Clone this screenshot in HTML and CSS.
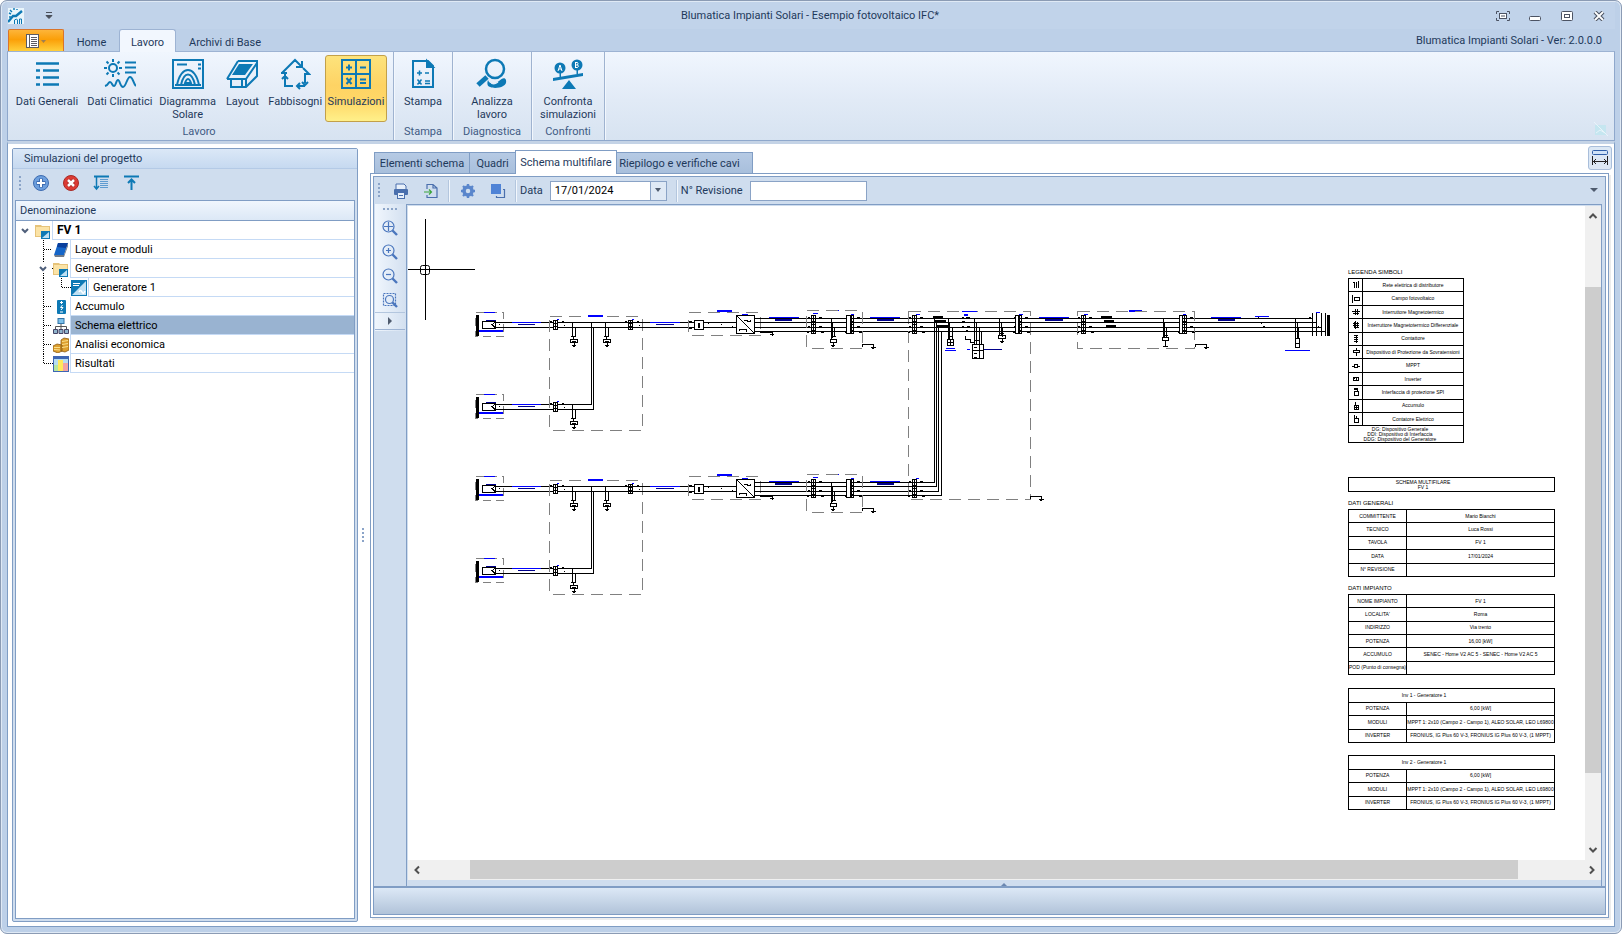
FILE: index.html
```
<!DOCTYPE html>
<html lang="it">
<head>
<meta charset="utf-8">
<title>Blumatica Impianti Solari - Esempio fotovoltaico IFC*</title>
<link rel="stylesheet" href="styles.css">
</head>
<body>
<div class="window">
  <header class="titlebar">
    <svg class="app-logo" viewBox="0 0 16 16" width="16" height="16"><rect width="16" height="16" fill="#e9f5fb"/><g fill="none" stroke="#0d79b5"><path d="M0 14L5 8h3l6-5" stroke-width="2.4"/><path d="M1 5l2 1M2 2l2 2M6 0v2M9 1v1M1 9h2" stroke-width="1.4"/><path d="M6.500 16v-4l2-1 1 1v4M11.500 16v-5l2 0v5" /></g></svg>
    <button class="quick" aria-label="Personalizza"><svg viewBox="0 0 8 8" width="8" height="8"><path d="M1 .5h6M1 3.500h6L4 6.500z" stroke="#4a4f5a" fill="#4a4f5a"/></svg></button>
    <h1 class="title">Blumatica Impianti Solari - Esempio fotovoltaico IFC*</h1>
    <div class="win-buttons">
      <button aria-label="Schermo intero"><svg viewBox="0 0 14 10" width="14" height="10" fill="none" stroke="#4c5363"><path d="M3 .5H.5V3M11 .5h2.500V3M3 9.500H.5V7M11 9.500h2.500V7"/><rect x="3.500" y="2.500" width="7" height="5" fill="#fff"/><path d="M5 5h4"/></svg></button>
      <button aria-label="Riduci"><svg viewBox="0 0 12 10" width="12" height="10"><rect x=".5" y="5.500" width="11" height="4" rx="1" fill="#fff" stroke="#4c5363"/></svg></button>
      <button aria-label="Ingrandisci"><svg viewBox="0 0 12 10" width="12" height="10" fill="#fff" stroke="#4c5363"><rect x=".5" y=".5" width="11" height="9" rx="1"/><rect x="3.500" y="3.500" width="5" height="3"/></svg></button>
      <button aria-label="Chiudi"><svg viewBox="0 0 12 10" width="12" height="10"><path d="M2 1l8 8M10 1L2 9" stroke="#4c5363" stroke-width="4"/><path d="M2 1l8 8M10 1L2 9" stroke="#fff" stroke-width="1.800"/></svg></button>
    </div>
  </header>
  <nav class="ribbon-tabs">
    <button class="app-button" aria-label="Menu"><svg viewBox="0 0 20 14" width="20" height="14"><rect x=".5" y=".5" width="12" height="13" fill="#fff" stroke="#5b5b62"/><path d="M3.500 1v12M5 3.500h6M5 5.500h6M5 7.500h6M5 9.500h6M5 11.500h6" stroke="#5b5b62"/><path d="M15 6h5l-2.500 3z" fill="#a08050"/></svg></button>
    <button class="rtab home">Home</button>
    <button class="rtab active">Lavoro</button>
    <button class="rtab base">Archivi di Base</button>
    <span class="version">Blumatica Impianti Solari - Ver: 2.0.0.0</span>
  </nav>
  <section class="ribbon">
    <div class="rgroup first">
      <div class="ritems">
        <button class="ritem w72"><svg viewBox="0 0 32 32" width="32" height="32"><path d="M5 5.500h23M5 12.500h4M12 12.500h16M5 19.500h4M12 19.500h16M5 26.500h4M12 26.500h16" stroke="#0d79b5" stroke-width="2.500"/></svg><span>Dati Generali</span></button>
        <button class="ritem w72"><svg viewBox="0 0 32 32" width="32" height="32" fill="none" stroke="#0d79b5" stroke-width="2"><circle cx="9" cy="10" r="4"/><path d="M9 1v3M9 16v3M0 10h3M15 10h3M2.500 3.500l2 2M13.500 14.500l2 2M15.500 3.500l-2 2M4.500 14.500l-2 2M21 4.500h11M21 9.500h11M21 14.500h11M1 28c4-1 3-4 5-4s2 4 4 4 2-6 4-6 2 7 5 7 4-10 7-10 3 6 6 9"/></svg><span>Dati Climatici</span></button>
        <button class="ritem w62"><svg viewBox="0 0 32 32" width="32" height="32" fill="none" stroke="#0d79b5" stroke-width="2"><rect x="1" y="2" width="30" height="28"/><path d="M5 6.500h10M26 6.500h3M26 10.500h3M5 27C9 7 23 7 27 27M9 27c3-14 11-14 14 0M12.500 27c2-8 5-8 7 0M15 27v-2h2v2M3 27h26"/></svg><span>Diagramma<br>Solare</span></button>
        <button class="ritem w46"><svg viewBox="0 0 32 32" width="32" height="32" fill="none" stroke="#0d79b5" stroke-width="2"><path d="M12 3h19v15L20 29H5v-8M1 21L12 3M1 21h19L31 5M20 21v8M16 22v7"/><path d="M13 6h14L19 17H6z" fill="#0d79b5" stroke="none"/></svg><span>Layout</span></button>
        <button class="ritem w58"><svg viewBox="0 0 32 32" width="32" height="32" fill="none" stroke="#0d79b5" stroke-width="2"><path d="M3 15L16 2l7 7M23 3v6h-6M24 10l6 6h-4v9M23 24l3 3 3-3M26 28h-8M21 25l-3 3 3 3M14 28H6V16M2 15h6M3 21l3-3 3 3"/></svg><span>Fabbisogni</span></button>
        <button class="ritem w62 sel"><svg viewBox="0 0 32 32" width="32" height="32" fill="none" stroke="#0d79b5" stroke-width="2"><path d="M2 2h28v28H2zM16 2v28M2 16h28"/><path d="M6 9.500h6M9 6.500v6M20 9.500h6M6.500 20l5 6M11.500 20l-5 6M20 21.500h6M20 25h6"/></svg><span>Simulazioni</span></button>
      </div>
      <div class="rlabel">Lavoro</div>
    </div>
    <div class="rgroup g2">
      <div class="ritems"><button class="ritem w46"><svg viewBox="0 0 32 32" width="32" height="32" fill="none" stroke="#0d79b5" stroke-width="2"><path d="M6 3h15l5 5v21H6z"/><path d="M20 3v6h6z" fill="#0d79b5"/><path stroke-width="1.500" d="M10 15h5M12.500 12.500v5M18 15h4M10.500 21.500l4 5M14.500 21.500l-4 5M18 23h5M18 25.500h5"/></svg><span>Stampa</span></button></div>
      <div class="rlabel">Stampa</div>
    </div>
    <div class="rgroup g3">
      <div class="ritems"><button class="ritem w62"><svg viewBox="0 0 32 32" width="32" height="32" fill="none" stroke="#0d79b5" stroke-width="2.500"><circle cx="19" cy="11" r="9"/><path d="M11 19l-9 8" stroke-width="5"/><path d="M12 22c2 6 9 3 11 1 3-3 6-4 7-1 2 8-12 9-16 7-3-1-3-4-2-7z" fill="#0d79b5" stroke="none"/><path d="M14 23c2 4 5 3 8 1" stroke="#e3edf8" stroke-width="1.500"/></svg><span>Analizza<br>lavoro</span></button></div>
      <div class="rlabel">Diagnostica</div>
    </div>
    <div class="rgroup g4">
      <div class="ritems"><button class="ritem w62"><svg viewBox="0 0 32 32" width="32" height="32"><g fill="#0d79b5"><circle cx="8" cy="10" r="5.500"/><circle cx="25" cy="7" r="5.500"/><path d="M1 20l30-5v3L1 23zM17 22l7 9H10zM7.500 14h1.500v6h-1.500zM24.500 12H26v5h-1.500z"/></g><path d="M6 13l2-6 2 6M7 11h2M23.500 4v6M23.500 4.500h2q1 1 0 2.500h-2M25.500 7q2 1 0 2.500h-2" fill="none" stroke="#fff"/></svg><span>Confronta<br>simulazioni</span></button></div>
      <div class="rlabel">Confronti</div>
    </div>
    <svg class="ribbon-mark" viewBox="0 0 14 14" width="14" height="14"><path d="M1 3h11v10H1z" fill="#c5e6f0"/><path d="M0 0l14 14M2 11l4-3 5 3" stroke="#e8f4fa" fill="none"/></svg>
  </section>

  <main class="main">
    <aside class="panel">
      <h2 class="panel-title">Simulazioni del progetto</h2>
      <div class="panel-tools">
        <i class="grip"></i>
        <button aria-label="Aggiungi"><svg viewBox="0 0 16 16" width="16" height="16"><circle cx="8" cy="8" r="7.500" fill="#6d9fdd" stroke="#3d6bb0"/><path d="M8 3.500v9M3.500 8h9" stroke="#3d6bb0" stroke-width="4"/><path d="M8 4v8M4 8h8" stroke="#fff" stroke-width="2"/></svg></button>
        <button aria-label="Elimina"><svg viewBox="0 0 16 16" width="16" height="16"><circle cx="8" cy="8" r="7.500" fill="#dc3b34" stroke="#a82a25"/><path d="M5 5l6 6M11 5l-6 6" stroke="#a82a25" stroke-width="4"/><path d="M5 5l6 6M11 5l-6 6" stroke="#fff" stroke-width="2.500"/></svg></button>
        <button aria-label="Espandi"><svg viewBox="0 0 16 16" width="16" height="16" fill="none" stroke="#0d79b5"><path d="M1 1.500h15" stroke-width="2"/><path d="M3.500 2v12M1 11l2.500 3L6 11" stroke-width="1.500"/><path d="M7 4.500h8M7 6.500h8M7 8.500h8M7 10.500h8M7 12.500h8" stroke="#5f9bd0"/></svg></button>
        <button aria-label="Comprimi"><svg viewBox="0 0 16 16" width="16" height="16" fill="none" stroke="#0d79b5"><path d="M1 1.500h15" stroke-width="2"/><path d="M8.500 15V5M5 8l3.500-3.500L12 8" stroke-width="2"/></svg></button>
      </div>
      <div class="tree">
        <div class="tree-head">Denominazione</div>
        <div class="row l0"><svg class="lines" viewBox="0 0 20 19" width="20" height="19"><path d="M6 8l3 3 3-3" fill="none" stroke="#4f5f7a" stroke-width="2"/></svg><svg class="ic" viewBox="0 0 16 16" width="16" height="16"><use href="#folder"/></svg><span class="cell root">FV 1</span></div>
        <div class="row l1"><svg class="lines" viewBox="0 0 38 19" width="38" height="19"><path d="M27.500 0v19M28 9.500h8" class="dot"/></svg><svg class="ic" viewBox="0 0 16 16" width="16" height="16"><path d="M5 1h10l-4 12H1z" fill="#1565c8"/><path d="M5 1h10l-2 5-9-1z" fill="#0a3f9c"/><path d="M1 13h10l4-12v3l-4 11H2z" fill="#707a88"/></svg><span class="cell">Layout e moduli</span></div>
        <div class="row l1"><svg class="lines" viewBox="0 0 38 19" width="38" height="19"><path d="M27.500 0v4M27.500 14v5M36 9.500h2" class="dot"/><path d="M24 8l3 3 3-3" fill="none" stroke="#4f5f7a" stroke-width="2"/></svg><svg class="ic" viewBox="0 0 16 16" width="16" height="16"><use href="#folder"/></svg><span class="cell">Generatore</span></div>
        <div class="row l2"><svg class="lines" viewBox="0 0 56 19" width="56" height="19"><path d="M27.500 0v19M45.500 0v9.500h9" class="dot"/></svg><svg class="ic" viewBox="0 0 16 16" width="16" height="16"><rect width="16" height="16" fill="#0d79b5"/><path d="M15 1v14H1z" fill="#bfe0f3"/><path d="M2 3.500h7M2 5.500h6" stroke="#fff"/><path d="M8 12q1.500-3 3 0t3-1" fill="none" stroke="#fff" stroke-width="1.500"/></svg><span class="cell">Generatore 1</span></div>
        <div class="row l1"><svg class="lines" viewBox="0 0 38 19" width="38" height="19"><path d="M27.500 0v19M28 9.500h8" class="dot"/></svg><svg class="ic" viewBox="0 0 16 16" width="16" height="16"><rect x="4" y="1" width="9" height="14" rx="1" fill="#0d79b5"/><path d="M8.500 2v3M7 3.500h3M9.500 6L7.500 8.500h2.500L8 11M7 13h3" stroke="#fff" fill="none"/></svg><span class="cell">Accumulo</span></div>
        <div class="row l1"><svg class="lines" viewBox="0 0 38 19" width="38" height="19"><path d="M27.500 0v19M28 9.500h8" class="dot"/></svg><svg class="ic" viewBox="0 0 16 16" width="16" height="16"><path d="M8 6v5M2.500 11V8.500h11V11" fill="none" stroke="#555"/><rect x="5" y=".5" width="6" height="5" fill="#7cc0ea" stroke="#3576a8"/><path d="M.5 11.500h4v4h-4zM6 11.500h4v4H6zM11.500 11.500h4v4h-4z" fill="#8fb4cc" stroke="#446"/></svg><span class="cell selected">Schema elettrico</span></div>
        <div class="row l1"><svg class="lines" viewBox="0 0 38 19" width="38" height="19"><path d="M27.500 0v19M28 9.500h8" class="dot"/></svg><svg class="ic" viewBox="0 0 16 16" width="16" height="16"><path d="M8 3l3-2 5 1v11l-4 2-4-1zM0 9l4-2 5 1v6l-4 2-5-2z" fill="#dd9f2e" stroke="#8c5a12" stroke-width=".8"/><path d="M9 4.500l6-1M9 7.500l6-1M9 10.500l6-1M1 10.500l6 0M1 12.500l6 .5" stroke="#fbe08a"/></svg><span class="cell">Analisi economica</span></div>
        <div class="row l1"><svg class="lines" viewBox="0 0 38 19" width="38" height="19"><path d="M27.500 0v9.500h9" class="dot"/></svg><svg class="ic" viewBox="0 0 16 16" width="16" height="16"><rect x=".5" y=".5" width="15" height="15" fill="#b6def0" stroke="#3d66b4"/><path d="M0 1.500h16" stroke="#3d66b4" stroke-width="3"/><path d="M1 9h4v6H1z" fill="#b5e6a0"/><path d="M5 4h5v11H5z" fill="#ffe95c"/><path d="M10 7h5v8h-5z" fill="#f2a3a3"/></svg><span class="cell">Risultati</span></div>
      </div>
    </aside>
    <div class="splitter"><i class="grip"></i></div>
    <section class="work">
      <div class="tabs">
        <button class="tab t1">Elementi schema</button><button class="tab t2">Quadri</button><button class="tab t3 on">Schema multifilare</button><button class="tab t4">Riepilogo e verifiche cavi</button>
        <button class="fit" aria-label="Adatta larghezza"><svg viewBox="0 0 18 18" width="18" height="18" fill="none"><rect x="1.500" y="1.500" width="15" height="4" rx="1" fill="#cfe3f8" stroke="#2f5fa8"/><path d="M1.500 7v9M16.500 7v9M2 12.500h14M5 10l-2.500 2.500L5 15M13 10l2.500 2.500L13 15" stroke="#222"/></svg></button>
      </div>
      <div class="pane">
        <div class="inner">
          <div class="toolbar">
            <i class="grip"></i>
            <button aria-label="Stampa"><svg viewBox="0 0 16 16" width="16" height="16"><path d="M3 1h8l2 2v4H3z" fill="#e8f0fa" stroke="#4a6fad"/><rect x="1" y="6" width="14" height="6" rx="1" fill="#4a6fad"/><rect x="4.500" y="9.500" width="7" height="6" fill="#e8f0fa" stroke="#4a6fad"/><path d="M6 12.500h4" stroke="#4a6fad"/></svg></button>
            <button aria-label="Esporta"><svg viewBox="0 0 16 16" width="16" height="16" fill="none"><path d="M4 6V1.500h6L14 5v9.500H4V12M10 1.500V5h4" stroke="#4a6fad" stroke-width="1.200"/><path d="M1 9h7M6 6.500L8.500 9 6 11.500" stroke="#3da63d" stroke-width="1.200"/></svg></button>
            <i class="sep"></i>
            <button aria-label="Impostazioni"><svg viewBox="0 0 16 16" width="16" height="16"><circle cx="8" cy="8" r="4" fill="none" stroke="#5a86cc" stroke-width="3.500"/><path d="M8 1v2.500M8 12.500V15M1 8h2.500M12.500 8H15M3 3l2 2M11 11l2 2M13 3l-2 2M5 11l-2 2" stroke="#5a86cc" stroke-width="2.400"/></svg></button>
            <button aria-label="Livelli"><svg viewBox="0 0 16 16" width="16" height="16"><rect x="1" y="1" width="10" height="10" fill="#4f83d6"/><path d="M13 6.500h1.500v8h-8V13" fill="none" stroke="#4a6fad" stroke-width="1.200"/></svg></button>
            <i class="sep"></i>
            <label for="data">Data</label>
            <span class="combo"><input id="data" type="text" value="17/01/2024"><button aria-label="Apri calendario"><svg viewBox="0 0 8 5" width="8" height="5"><path d="M1 0h6L4 4z" fill="#4f5b6e"/></svg></button></span>
            <i class="sep"></i>
            <label for="rev">N° Revisione</label>
            <input id="rev" class="rev" type="text">
            <button class="more" aria-label="Altro"><svg viewBox="0 0 8 5" width="8" height="5"><path d="M0 0h8L4 4z" fill="#4f5b6e"/></svg></button>
          </div>
          <div class="editor">
            <div class="side">
              <i class="hgrip"></i>
              <button aria-label="Zoom esteso"><svg class="zi" viewBox="0 0 16 16" width="16" height="16"><circle cx="6.500" cy="6.500" r="5.500"/><path d="M2 6.500h9M6.500 2v9"/><path d="M10.500 10.500L15 15" class="h"/></svg></button>
              <button aria-label="Zoom avanti"><svg class="zi" viewBox="0 0 16 16" width="16" height="16"><circle cx="6.500" cy="6.500" r="5.500"/><path d="M4 6.500h5M6.500 4v5"/><path d="M10.500 10.500L15 15" class="h"/></svg></button>
              <button aria-label="Zoom indietro"><svg class="zi" viewBox="0 0 16 16" width="16" height="16"><circle cx="6.500" cy="6.500" r="5.500"/><path d="M4 6.500h5"/><path d="M10.500 10.500L15 15" class="h"/></svg></button>
              <button aria-label="Zoom finestra"><svg class="zi" viewBox="0 0 16 16" width="16" height="16"><path d="M1.500 1.500h12v12h-12z" stroke-dasharray="2 1"/><circle cx="7.500" cy="7.500" r="4"/><path d="M10.500 10.500L15 15" class="h"/></svg></button>
              <button class="expand" aria-label="Espandi"><svg viewBox="0 0 5 8" width="5" height="8"><path d="M0 0v8l4-4z" fill="#4f5b6e"/></svg></button>
            </div>
            <div class="viewport">
              <div class="canvas">
                <svg class="diagram" viewBox="407 206 928 640" width="928" height="640" fill="none" stroke="#000" shape-rendering="crispEdges">
                  <defs>
                    <g id="folder" shape-rendering="auto" stroke="none"><path d="M0 2h6l1 1h8v11H0z" fill="#e6c37a"/><path d="M1 4h13v9H1z" fill="#fbe3a6"/><rect x="6" y="8" width="9" height="8" fill="#0d79b5"/><path d="M14 9v6H7z" fill="#bfe0f3"/></g>
                    <g id="fuse"><path d="M552.500 320.500h4v9h-4zM554.500 320v10M552 323.500h5M552 326.500h5"/><path d="M549 321.500h2M549 327.500h2M561 321.500h2M559 327.500h3M563 325.500h1"/></g>
                    <g id="fuse4"><path d="M810.500 315.500h4v18h-4zM812.500 315v19M810 318.500h5M810 321.500h5M810 324.500h5M810 327.500h5M810 330.500h5"/><path d="M807 317.500h2M806 322.500h2M807 326.500h2M806 332.500h2M818 317.500h3M820 322.500h3M818 326.500h3M820 332.500h3"/></g>
                    <g id="spd"><path d="M571.500 322v15M574.500 327v10M572 336.500h3M569.500 339.500h7v3h-7zM571 341.500h4M573 343v3M571 345.500h4M572 346.500h2M572.500 337v2M570 336.500h2"/></g>
                    <g id="spd4"><path d="M830.500 318v21M831.500 322v16M833.500 327v10M829.500 339.500h6v3h-6zM832 343v2M830 345.500h4M831 346.500h2M830 336.500h5"/></g>
                    <g id="stub"><path d="M861 346.500h1M861.500 347v-2.500h11v3M870 347.500h5M871 348.500h2"/></g>
                    <g id="pv">
                      <path class="dash" d="M474.500 312.500h28v24h-28z"/>
                      <path d="M476.500 315v21" stroke-width="3"/><path d="M481.500 321.500h13v7h-13zM494 322.500l-3 2 3 3"/>
                      <path class="b" d="M483 312.500h11"/><path class="n" d="M485 320.500h10"/><path class="b" stroke-width="2" d="M478 331h24"/>
                      <path d="M494 322.500h59M494 327.500h59M498 324.500h1"/><path class="b" d="M511 322.500h29"/><path class="n" d="M517 324.500h17"/>
                      <use href="#fuse"/><path class="b" d="M556 319.500h2"/>
                    </g>
                    <g id="string">
                      <use href="#pv"/><use href="#pv" y="82"/>
                      <path class="dash2" d="M548.500 316.500h93v114h-93z"/>
                      <path class="b" stroke-width="2" d="M587 316h15"/>
                      <path d="M557 322.500h136M557 327.500h136M557 404.500h33.500V322M557 409.500h35.500V327"/>
                      <use href="#fuse" x="75"/><path class="b" d="M631 319.500h2M649 322.500h30"/><path class="n" d="M655 324.500h18"/>
                      <use href="#spd"/><use href="#spd" x="33"/><use href="#spd" y="82"/>
                      <path class="dash2" d="M687.500 312.500h72v23h-72z"/>
                      <path class="b" stroke-width="2" d="M716 311h15"/>
                      <path d="M702 322.500h33M702 327.500h33"/>
                      <path fill="#fff" d="M693.500 320.500h9v9h-9zM735.500 315.500h18v18h-18z"/>
                      <path d="M698 323v5" stroke-width="2"/><path d="M735.500 315.500l18 18M743 320.500h3v1h3v-2M738 331v-1.500h7v2M688 321.500h3M688 328.500h3M707 323.500h1M720 324.500h1M731 326.500h1"/>
                      <path class="b" d="M741 314.500h6M768 317.500h30M869 317.500h30M829 310.500h9M812 313.500h5M850 314.500h3"/>
                      <path class="n" stroke-width="2" d="M774 320h17M876 320h17"/>
                      <path d="M753 318.500h158M753 322.500h158M753 327.500h158M753 331.500h158M759 332.500h12v3M769 334.500h4"/>
                      <path class="dash2" d="M805.500 310.500h56v38h-56z"/>
                      <use href="#fuse4"/><use href="#fuse4" x="38"/><path d="M845.500 315.500h4v18h-4z" fill="#fff"/>
                      <use href="#spd4"/><use href="#stub"/>
                    </g>
                  </defs>
                  <path d="M424.500 219v101M407 269.500h67"/><rect x="419.500" y="265.500" width="9" height="9" rx="2" shape-rendering="auto"/>
                  <use href="#string"/><use href="#string" y="164"/>
                  <path class="dash2" d="M907.500 311.500h122v188h-122z"/>
                  <path d="M911 318.500h400M911 322.500h404M911 327.500h409M911 331.500h413"/>
                  <path d="M911 482.500h22.500V318M911 486.500h24.500V322M911 491.500h26.500V327M911 495.500h29.500V331"/>
                  <use href="#fuse4" x="101"/><use href="#fuse4" x="101" y="164"/>
                  <path d="M932 317h10M934 321h11M935 326h12M1100 317h11M1103 321h10M1105 326h10" stroke-width="2"/>
                  <path d="M947.500 318v21M948.500 322v17M951.500 327v12M946.500 339.500h6v6h-6zM949.500 339v7M946 342.500h6M948 336.500h4"/>
                  <path d="M961 317.500h2M965 317.500h4M961 321.500h3M965 322.500h2M961 326.500h2M966 326.500h3M962 331.500h2M965 330.500h2M964.500 336v3h5v3h3"/>
                  <path d="M973.500 318v26M975.500 322v22M978.500 327v17M980.500 331v13M973 340.500h6"/>
                  <path d="M971.500 344.500h11v14h-11zM978.500 344v15M971 350.500h12M973 347.500h3M973 353.500h3M973 357.500h3"/>
                  <path d="M998.500 318v17M1000.500 322v13M1001.500 327v10M997.500 335.500h7v3h-7zM1001 338v3M999 341.500h4M1000 342.500h2M999 333.500h4"/>
                  <use href="#fuse4" x="206"/><path d="M1014.500 315.500h3v18h-3z" fill="#fff"/>
                  <path class="b" d="M915 314.500h4M945 348.500h9M944 350.500h11M966 349.500h3M961 311.500h15M1018 314.500h4M1038 317.500h30M1083 314.500h4M1182 314.500h3M1210 317.500h30M1254 316.500h14M1315 312.500h4M1284 350.500h25M915 478.500h3"/>
                  <path class="b" stroke-width="2" d="M1128 311h13M963 315h4"/>
                  <path class="n" stroke-width="2" d="M1044 320h18M1217 320h17"/><path class="n" d="M983 349.500h18"/>
                  <path class="dash2" d="M1076.500 311.500h117v37h-117z"/>
                  <use href="#fuse4" x="270"/><use href="#fuse4" x="371"/><path d="M1178.500 315.500h3v18h-3z" fill="#fff"/>
                  <path d="M1162.500 318v20M1163.500 322v16M1165.500 327v10M1161.500 337.500h6v3h-6zM1164.500 341v6M1162 346.500h5M1163 335.500h4"/>
                  <use href="#stub" x="333"/><use href="#stub" x="168" y="152"/>
                  <path d="M1294.500 318v21M1296.500 322v17M1297.500 327v12M1294.500 338.500h4v9h-4zM1294 343.500h5"/>
                  <path d="M1311.500 313v23M1315.500 313v23M1320.500 313v23M1324.500 313v23M1308 317.500h2M1317 326.500h1M1257 317.500h1M1260 323.500h1M1262 326.500h2"/>
                  <path d="M1327.500 315v21" stroke-width="3"/>
                </svg>
                <div class="sheets">
                  <h3>LEGENDA SIMBOLI</h3>
                  <table class="legend">
                    <tr><td><svg viewBox="0 0 8 8"><path d="M1 1.500h2M2.500 1v6M4.500 1v6M6.500 0v7"/></svg></td><td>Rete elettrica di distributore</td></tr>
                    <tr><td><svg viewBox="0 0 8 8"><path d="M.5 0v8M2.500 2.500h5v3h-5z"/></svg></td><td>Campo fotovoltaico</td></tr>
                    <tr><td><svg viewBox="0 0 8 8"><path d="M0 3.500h8M1 5.500h6M3.500 1v6M5.500 1v6"/></svg></td><td>Interruttore Magnetotermico</td></tr>
                    <tr><td><svg viewBox="0 0 8 8"><path d="M1 2.500h6M1 4.500h6M2.500 1v6M3.500 0v8M5.500 1v6M2 6.500h5"/></svg></td><td>Interruttore Magnetotermico Differenziale</td></tr>
                    <tr><td><svg viewBox="0 0 8 8"><path d="M2 .5h4M2 2.500h4M2 4.500h4M2 6.500h4M4.500 0v8"/></svg></td><td>Contattore</td></tr>
                    <tr><td><svg viewBox="0 0 8 8"><path d="M4.500 0v3M1.500 2.500h6v2h-6zM4.500 5v3"/></svg></td><td>Dispositivo di Protezione da Sovratensioni</td></tr>
                    <tr><td><svg viewBox="0 0 8 8"><path d="M0 4.500h2M6 4.500h2M2.500 2.500h3v3h-3z"/></svg></td><td>MPPT</td></tr>
                    <tr><td><svg viewBox="0 0 8 8"><path d="M1.500 2.500h5v3h-5zM1 3.500h2M4.500 2v4"/></svg></td><td>Inverter</td></tr>
                    <tr><td><svg viewBox="0 0 8 8"><path d="M2 .5h4M2 1.500h4M2.500 3.500h4v4h-4zM5.500 0v4"/></svg></td><td>Interfaccia di protezione SPI</td></tr>
                    <tr><td><svg viewBox="0 0 8 8"><path d="M3.500 0v3M2.500 3.500h4v4h-4zM4.500 3v4M2 5.500h4"/></svg></td><td>Accumulo</td></tr>
                    <tr><td><svg viewBox="0 0 8 8"><path d="M2.500 0v3M4.500 1v2M2.500 3.500h4v4h-4z"/></svg></td><td>Contatore Elettrico</td></tr>
                    <tr class="notes"><td colspan="2">DG: Dispositivo Generale<br>DDI: Dispositivo di Interfaccia<br>DDG: Dispositivo del Generatore</td></tr>
                  </table>
                  <div class="sheet-title">SCHEMA MULTIFILARE<br>FV 1</div>
                  <h3>DATI GENERALI</h3>
                  <table class="info r5">
                    <colgroup><col class="key"><col></colgroup>
                    <tr><th>COMMITTENTE</th><td>Mario Bianchi</td></tr>
                    <tr><th>TECNICO</th><td>Luca Rossi</td></tr>
                    <tr><th>TAVOLA</th><td>FV 1</td></tr>
                    <tr><th>DATA</th><td>17/01/2024</td></tr>
                    <tr><th>N° REVISIONE</th><td></td></tr>
                  </table>
                  <h3>DATI IMPIANTO</h3>
                  <table class="info r6">
                    <colgroup><col class="key"><col></colgroup>
                    <tr><th>NOME IMPIANTO</th><td>FV 1</td></tr>
                    <tr><th>LOCALITA'</th><td>Roma</td></tr>
                    <tr><th>INDIRIZZO</th><td>Via trento</td></tr>
                    <tr><th>POTENZA</th><td>16,00 [kW]</td></tr>
                    <tr><th>ACCUMULO</th><td>SENEC - Home V2 AC 5 - SENEC - Home V2 AC 5</td></tr>
                    <tr><th>POD (Punto di consegna)</th><td></td></tr>
                  </table>
                  <table class="info r4">
                    <colgroup><col class="key"><col></colgroup>
                    <tr><td colspan="2" class="inv">Inv 1 - Generatore 1</td></tr>
                    <tr><th>POTENZA</th><td>6,00 [kW]</td></tr>
                    <tr><th>MODULI</th><td>MPPT 1: 2x10 (Campo 2 - Campo 1), ALEO SOLAR, LEO L69800</td></tr>
                    <tr><th>INVERTER</th><td>FRONIUS, IG Plus 60 V-3, FRONIUS IG Plus 60 V-3, (1 MPPT)</td></tr>
                  </table>
                  <table class="info r4">
                    <colgroup><col class="key"><col></colgroup>
                    <tr><td colspan="2" class="inv">Inv 2 - Generatore 1</td></tr>
                    <tr><th>POTENZA</th><td>6,00 [kW]</td></tr>
                    <tr><th>MODULI</th><td>MPPT 1: 2x10 (Campo 2 - Campo 1), ALEO SOLAR, LEO L69800</td></tr>
                    <tr><th>INVERTER</th><td>FRONIUS, IG Plus 60 V-3, FRONIUS IG Plus 60 V-3, (1 MPPT)</td></tr>
                  </table>
                </div>
              </div>
              <div class="vbar"><button aria-label="Su"><svg viewBox="0 0 10 8" width="10" height="8"><path d="M1.500 6L5 2.500 8.500 6"/></svg></button><div class="vtrack"><div class="vthumb"></div></div><button aria-label="Giù"><svg viewBox="0 0 10 8" width="10" height="8"><path d="M1.500 2L5 5.500 8.500 2"/></svg></button></div>
              <div class="hbar"><button aria-label="Sinistra"><svg viewBox="0 0 8 10" width="8" height="10"><path d="M6 1.500L2.500 5 6 8.500"/></svg></button><div class="htrack"><div class="hthumb"></div></div><button aria-label="Destra"><svg viewBox="0 0 8 10" width="8" height="10"><path d="M2 1.500L5.500 5 2 8.500"/></svg></button></div>
            </div>
          </div>
          <div class="status"><svg viewBox="0 0 6 4" width="6" height="4"><path d="M0 4l3-3 3 3z" fill="#6c87b0"/></svg></div>
        </div>
      </div>
    </section>
  </main>
</div>
</body>
</html>
```
FILE: styles.css
```
* { box-sizing: border-box; }
html, body { height: 100%; }
body { margin: 0; background: #fff; color: #1e395b; font: 11px/13px Roboto, "Liberation Sans", sans-serif; overflow: hidden; }
button { margin: 0; padding: 0; border: 0; background: none; color: inherit; font: inherit; display: flex; align-items: center; justify-content: center; }
input { font: inherit; min-width: 0; }
h1, h2, h3 { margin: 0; font: inherit; }
svg { display: block; flex: none; }

.window { height: 100vh; display: flex; flex-direction: column; padding: 0 6px 6px; background: #bdd0e8; border: 1px solid #8b9bb4; border-radius: 7px; box-shadow: inset 0 0 0 1px #dfe9f5; }
.titlebar { flex: none; display: flex; align-items: center; height: 27px; margin-top: 1px; background: #c1d3ea; }
.app-logo { margin-left: 1px; }
.quick { width: 20px; height: 20px; margin-left: 15px; }
.title { flex: 1; text-align: center; padding-left: 74px; }
.win-buttons { display: flex; }
.win-buttons button { width: 32px; height: 20px; }
.ribbon-tabs { height: 22px; flex: none; display: flex; align-items: stretch; padding-right: 13px; }
.app-button { width: 56px; margin-left: 1px; border: 1px solid #d9742a; border-bottom: 0; border-radius: 2px 2px 0 0; background: linear-gradient(#fdb53a, #fb9f08 45%, #ffcf3c); padding-right: 1px; }
.rtab { padding-top: 3px; border: 1px solid transparent; border-bottom: 0; }
.rtab.home { width: 55px; }
.rtab.active { background: #f2f7fe; border-color: #9db3d3; border-radius: 3px 3px 0 0; position: relative; z-index: 1; margin-bottom: -1px; width: 57px; }
.rtab.base { width: 98px; }
.version { margin-left: auto; align-self: center; }
.ribbon { flex: none; height: 90px; display: flex; border: 1px solid #8fa8cc; border-top-color: #9db3d3; background: linear-gradient(#f0f6fe, #e1eaf6 55%, #d7e3f1); }
.rgroup { display: flex; flex-direction: column; border-right: 1px solid #9fb3d0; box-shadow: 1px 0 #f2f7fd; padding: 3px 5px 0; }
.rgroup.first { width: 386px; padding: 3px 6px 0 3px; }
.rgroup.g2 { width: 59px; }
.rgroup.g3 { width: 79px; }
.rgroup.g4 { width: 73px; }
.ritems { display: flex; justify-content: center; height: 68px; }
.first .ritems { justify-content: space-between; }
.ritem { flex-direction: column; justify-content: flex-start; padding-top: 2px; white-space: nowrap; border: 1px solid transparent; border-radius: 3px; }
.ritem span { margin-top: 5px; }
.w72 { width: 72px; } .w62 { width: 62px; } .w58 { width: 58px; } .w46 { width: 46px; }
.ritem.sel { border-color: #c2a04a; background: linear-gradient(#fde37c, #fed364 45%, #ffd767 70%, #fff08a); }
.rlabel { text-align: center; color: #3f5b84; line-height: 17px; padding-top: 1px; }
.ribbon-mark { margin: auto 6px 4px auto; }

.main { flex: 1; min-height: 0; display: flex; background: #fff; border: 1px solid #7f9dc4; border-top: 3px solid #c4d3e6; padding: 4px 5px 4px 4px; }
.panel { width: 346px; flex: none; border: 1px solid #809dc4; background: #cfddee; display: flex; flex-direction: column; padding: 0 2px 2px; border-radius: 2px; }
.panel-title { line-height: 18px; padding: 1px 0 0 11px; border-bottom: 1px solid #b4cae6; background: linear-gradient(#dbe8f7, #c6d9f0); margin: 0 -2px; }
.panel-tools { height: 31px; display: flex; align-items: center; padding-bottom: 3px; }
.panel-tools button { width: 30px; }
.grip { width: 2px; height: 15px; margin: 0 6px 0 3px; background: repeating-linear-gradient(#8ba4c8 0 2px, transparent 2px 4px); }
.panel-tools .grip { margin: 0 5px 0 4px; }
.tree { flex: 1; background: #fff; border: 1px solid #809dc4; color: #000; }
.tree-head { height: 20px; line-height: 19px; padding-left: 4px; color: #1e395b; background: linear-gradient(#f0f6fd, #dce8f6); border-bottom: 1px solid #809dc4; }
.row { height: 19px; display: flex; align-items: center; }
.lines { margin-right: -1px; }
.dot { fill: none; stroke: #000; stroke-dasharray: 1 1; shape-rendering: crispEdges; }
.cell { flex: 1; height: 19px; line-height: 19px; margin-left: 1px; padding-left: 4px; border-left: 1px solid #c5daf5; border-bottom: 1px solid #c5daf5; }
.cell.root { font-weight: bold; font-size: 12px; line-height: 18px; }
.cell.selected { background: #99b3d1; }
.splitter { width: 12px; flex: none; display: flex; align-items: center; }
.splitter .grip { margin: 0 4px; }

.work { flex: 1; min-width: 0; display: flex; flex-direction: column; padding-bottom: 4px; }
.tabs { height: 25px; flex: none; display: flex; align-items: flex-end; padding-left: 4px; position: relative; z-index: 1; }
.tab { height: 21px; padding: 1px 0 0; border: 1px solid #809dc4; border-bottom: 0; margin-right: -1px; background: linear-gradient(#b6cae4, #a8bfdc); white-space: nowrap; }
.t1 { width: 96px; } .t2 { width: 47px; } .t3 { width: 102px; }
.t4 { width: 137px; padding-right: 10px; }
.tab.on { height: 24px; margin-bottom: -1px; background: #fff; padding: 0; }
.fit { margin: 0 -3px 3px auto; width: 24px; height: 24px; border: 1px solid #a9bedb; border-radius: 3px; background: #dce8f5; }
.pane { flex: 1; min-height: 0; display: flex; border: 1px solid #809dc4; padding: 2px; box-shadow: 2px 2px #ececec; }
.inner { flex: 1; min-width: 0; border: 1px solid #809dc4; background: #cfddee; display: flex; flex-direction: column; padding: 0 1px; }
.toolbar { height: 27px; flex: none; display: flex; align-items: center; padding-right: 2px; }
.toolbar > button { width: 30px; height: 24px; }
.sep { width: 2px; height: 22px; border-left: 1px solid #b3c6de; background: #f2f7fd; margin: 0 3px 0 2px; }
.combo { display: flex; margin: 0 7px; border: 1px solid #8aa3c6; width: 117px; height: 20px; background: #fff; }
.combo input { border: 0; flex: 1; padding: 0 4px; color: #000; background: none; }
.combo button { width: 16px; border-left: 1px solid #8aa3c6; background: #dfe9f5; }
.rev { width: 117px; height: 20px; border: 1px solid #8aa3c6; background: #fff; margin-left: 7px; padding: 0 4px; }
.toolbar > .more { margin-left: auto; width: 16px; }
.editor { flex: 1; min-height: 0; display: flex; }
.side { width: 32px; flex: none; padding-right: 1px; border-right: 1px solid #809dc4; display: flex; flex-direction: column; background: linear-gradient(90deg, #f0f6fd, #d3e0f0) 0 0 / 31px 127px no-repeat; }
.side button { height: 24px; }
.side .expand { height: 18px; border-top: 1px solid #b3c6de; border-bottom: 1px solid #9db3d3; }
.hgrip { height: 2px; width: 14px; margin: 4px auto 6px; background: repeating-linear-gradient(90deg, #8ba4c8 0 2px, transparent 2px 4px); }
.zi { fill: none; stroke: #4a76bd; stroke-width: 1.2; }
.zi .h { stroke-width: 2.400; }
.viewport { flex: 1; min-width: 0; min-height: 0; display: grid; grid-template: minmax(0, 1fr) 20px / minmax(0, 1fr) 16px; border-top: 1px solid #809dc4; border-right: 1px solid #809dc4; padding: 1px 0 6px 1px; margin-right: 2px; }
.canvas { background: #fff; overflow: hidden; display: flex; color: #000; }
.diagram { flex: none; }
.dash { stroke: #808080; stroke-dasharray: 8 5; }
.dash2 { stroke: #808080; stroke-dasharray: 12 7; }
.b { stroke: #00f; }
.n { stroke: #00008b; }
.sheets { padding: 62px 0 0 12px; font: 5px/5px "Liberation Sans", sans-serif; white-space: nowrap; }
.sheets h3 { font-size: 6px; line-height: 8px; margin-bottom: 2px; }
.sheets table { border-collapse: collapse; table-layout: fixed; }
.sheets td, .sheets th { border: 1px solid #000; padding: 0; text-align: center; font-weight: normal; height: 13px; }
.sheets svg { width: 8px; height: 8px; margin: auto; fill: none; stroke: #000; shape-rendering: crispEdges; }
.legend { width: 116px; height: 165px; margin-bottom: 34px; }
.legend td:first-child:not([colspan]) { width: 14px; }
.legend .notes td { height: 16px; padding-right: 12px; }
.sheet-title { width: 207px; height: 15px; border: 1px solid #000; text-align: center; padding: 2px 57px 0 0; margin-bottom: 7px; }
.info { width: 207px; }
.key { width: 58px; }
.info .inv { padding-right: 55px; }
.r5 { height: 68px; margin-bottom: 7px; } .r6 { height: 81px; margin-bottom: 13px; } .r4 { height: 55px; margin-bottom: 12px; }
.vbar { background: #f0f0f0; display: flex; flex-direction: column; }
.vbar button { height: 20px; width: 16px; }
.vtrack { flex: 1; padding: 61px 0 67px; display: flex; }
.vthumb { flex: 1; background: #cdcdcd; }
.hbar { grid-column: 1 / 3; background: #f0f0f0; display: flex; }
.hbar button { width: 18px; }
.htrack { flex: 1; display: flex; padding: 0 65px 1px 44px; }
.hthumb { flex: 1; background: #cdcdcd; }
.vbar path, .hbar path { fill: none; stroke: #505050; stroke-width: 2; }
.status { height: 28px; flex: none; border-top: 2px solid #809dc4; background: linear-gradient(#dce8f6, #b1c3d9); display: flex; justify-content: center; padding-left: 28px; margin: 0 -1px; }
.status svg { margin-top: -6px; }
```
